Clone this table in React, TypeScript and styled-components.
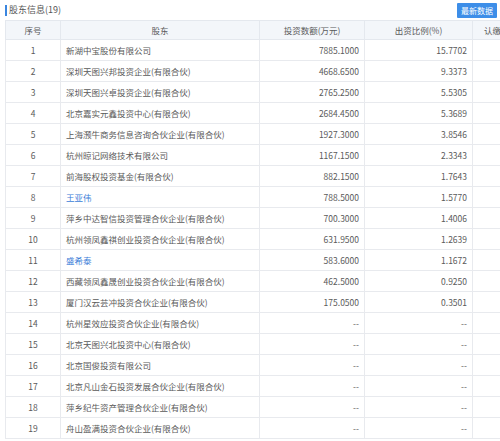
import React from "react";
import styled, { createGlobalStyle } from "styled-components";

const Global = createGlobalStyle`
  html, body { margin: 0; padding: 0; background: #fff; overflow: hidden; }
  body { font-family: "Noto Sans CJK SC", "Microsoft YaHei", sans-serif; }
`;

const Page = styled.div`
  width: 500px;
  height: 441px;
  overflow: hidden;
  padding: 2px 0 0 5px;
  box-sizing: border-box;
`;

const TitleBar = styled.div`
  display: flex;
  align-items: center;
  justify-content: space-between;
  height: 16px;
  margin-bottom: 2px;
  width: 492px;
`;

const Title = styled.div`
  display: flex;
  align-items: center;
  font-size: 9px;
  color: #555;
  line-height: 12px;
  &::before {
    content: "";
    display: block;
    width: 2px;
    height: 11px;
    background: #3a86e0;
    margin-right: 2px;
  }
`;

const Button = styled.div`
  background: #3d8ee8;
  color: #fff;
  font-size: 8px;
  line-height: 15px;
  height: 15px;
  padding: 0 4px;
  border-radius: 1px;
`;

const Table = styled.table`
  border-collapse: collapse;
  table-layout: fixed;
  width: 536px;
  font-size: 8.5px;
  color: #5a5a5a;
`;

const HeadCell = styled.th<{ $w: number }>`
  width: ${(p) => p.$w}px;
  height: 18px;
  padding: 0;
  background: #f3f6fa;
  border: 1px solid #e4e8ee;
  font-weight: normal;
  color: #5a5a5a;
  text-align: center;
  white-space: nowrap;
  overflow: hidden;
`;

const Cell = styled.td<{ $align?: "left" | "center" | "right" }>`
  height: 20px;
  padding: 0 5px;
  border: 1px solid #e8eaee;
  text-align: ${(p) => p.$align ?? "left"};
  white-space: nowrap;
  overflow: hidden;
`;

const LinkText = styled.span`
  color: #3b7dd8;
`;

type Row = { name: string; amount: string; ratio: string; person?: boolean };

const rows: Row[] = [
  { name: "新湖中宝股份有限公司", amount: "7885.1000", ratio: "15.7702" },
  { name: "深圳天图兴邦投资企业(有限合伙)", amount: "4668.6500", ratio: "9.3373" },
  { name: "深圳天图兴卓投资企业(有限合伙)", amount: "2765.2500", ratio: "5.5305" },
  { name: "北京嘉实元鑫投资中心(有限合伙)", amount: "2684.4500", ratio: "5.3689" },
  { name: "上海滪牛商务信息咨询合伙企业(有限合伙)", amount: "1927.3000", ratio: "3.8546" },
  { name: "杭州晾记网络技术有限公司", amount: "1167.1500", ratio: "2.3343" },
  { name: "前海股权投资基金(有限合伙)", amount: "882.1500", ratio: "1.7643" },
  { name: "王亚伟", amount: "788.5000", ratio: "1.5770", person: true },
  { name: "萍乡中达智信投资管理合伙企业(有限合伙)", amount: "700.3000", ratio: "1.4006" },
  { name: "杭州领凤鑫祺创业投资合伙企业(有限合伙)", amount: "631.9500", ratio: "1.2639" },
  { name: "盛希泰", amount: "583.6000", ratio: "1.1672", person: true },
  { name: "西藏领凤鑫晟创业投资合伙企业(有限合伙)", amount: "462.5000", ratio: "0.9250" },
  { name: "厦门汉云芸冲投资合伙企业(有限合伙)", amount: "175.0500", ratio: "0.3501" },
  { name: "杭州星效应投资合伙企业(有限合伙)", amount: "--", ratio: "--" },
  { name: "北京天图兴北投资中心(有限合伙)", amount: "--", ratio: "--" },
  { name: "北京国俊投资有限公司", amount: "--", ratio: "--" },
  { name: "北京凡山金石投资发展合伙企业(有限合伙)", amount: "--", ratio: "--" },
  { name: "萍乡纪牛资产管理合伙企业(有限合伙)", amount: "--", ratio: "--" },
  { name: "舟山盈满投资合伙企业(有限合伙)", amount: "--", ratio: "--" },
];

export default function App() {
  return (
    <Page>
      <Global />
      <TitleBar>
        <Title>股东信息(19)</Title>
        <Button>最新数据</Button>
      </TitleBar>
      <Table>
        <thead>
          <tr>
            <HeadCell $w={54}>序号</HeadCell>
            <HeadCell $w={198}>股东</HeadCell>
            <HeadCell $w={104}>投资数额(万元)</HeadCell>
            <HeadCell $w={107}>出资比例(%)</HeadCell>
            <HeadCell $w={73}>认缴出资日期</HeadCell>
          </tr>
        </thead>
        <tbody>
          {rows.map((r, i) => (
            <tr key={i}>
              <Cell $align="center">{i + 1}</Cell>
              <Cell>{r.person ? <LinkText>{r.name}</LinkText> : r.name}</Cell>
              <Cell $align="right">{r.amount}</Cell>
              <Cell $align="right">{r.ratio}</Cell>
              <Cell $align="center"></Cell>
            </tr>
          ))}
        </tbody>
      </Table>
    </Page>
  );
}
